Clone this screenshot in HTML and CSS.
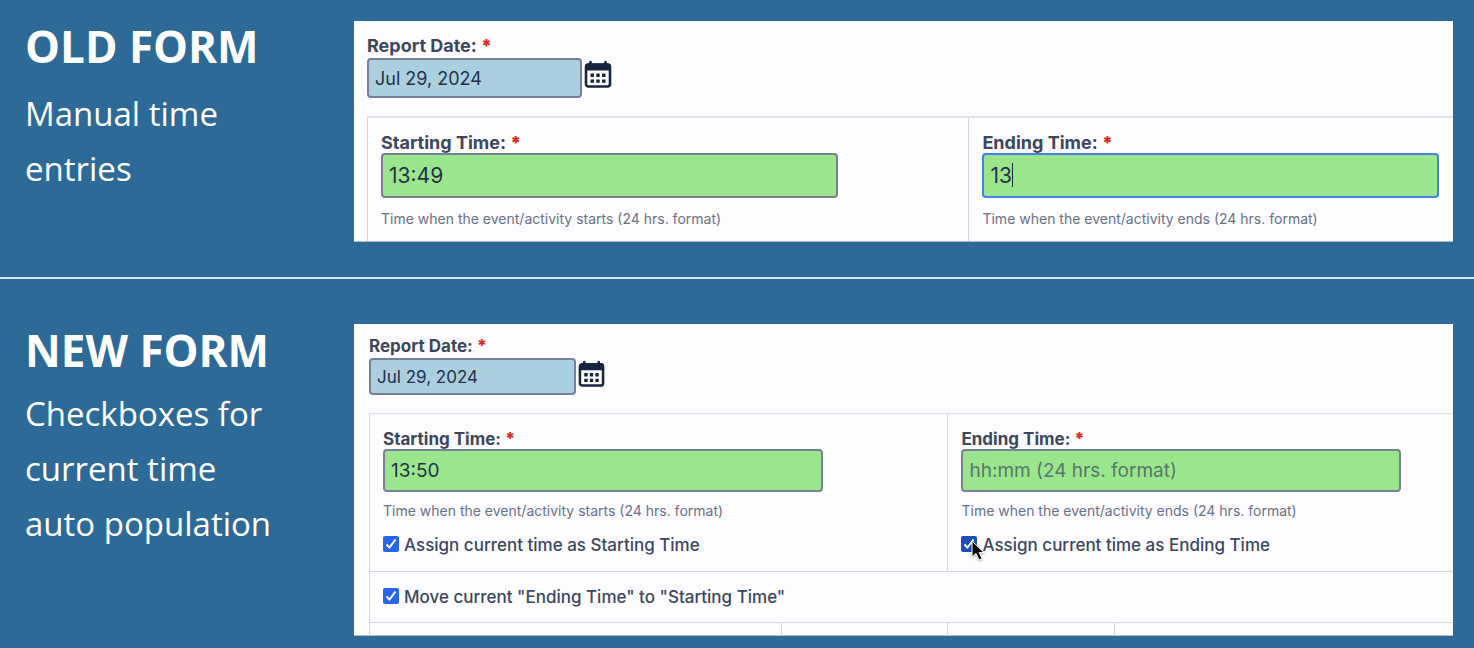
FILE: index.html
```html
<!DOCTYPE html>
<html lang="en">
<head>
<meta charset="utf-8">
<meta name="viewport" content="width=device-width, initial-scale=1">
<title>Old form and new form</title>
<link rel="stylesheet" href="styles.css">
</head>
<body>
<svg class="sprite" aria-hidden="true">
  <symbol id="calendar" viewBox="0 0 28 28">
    <path d="M6.500 2v4M21.500 2v4" stroke="currentColor" stroke-width="2.600" stroke-linecap="round"/>
    <rect x="2" y="4.500" width="24" height="22" rx="2.500" fill="none" stroke="currentColor" stroke-width="2.600"/>
    <path d="M1 6a2.500 2.500 0 0 1 2.500-2.500h21A2.500 2.500 0 0 1 27 6v4.500H1z" fill="currentColor"/>
    <path d="M6.500 13.500H10V17H6.500zM12.300 13.500h3.400V17h-3.400zM18 13.500h3.500V17H18zM6.500 19.500H10v3.300H6.500zM12.300 19.500h3.400v3.300h-3.400zM18 19.500h3.500v3.300H18z" fill="currentColor"/>
  </symbol>
</svg>
<main>
  <section class="comparison old">
    <div class="caption">
      <h2>OLD FORM</h2>
      <p>Manual time entries</p>
    </div>
    <form class="panel">
      <div class="date">
        <label for="old-date">Report Date: <b class="req">*</b></label>
        <div class="date-row">
          <input class="box date-box" id="old-date" type="text" value="Jul 29, 2024">
          <button class="picker" type="button" aria-label="Choose date"><svg><use href="#calendar"/></svg></button>
        </div>
      </div>
      <div class="times">
        <div class="cell">
          <label for="old-start">Starting Time: <b class="req">*</b></label>
          <input class="box time-box" id="old-start" type="text" value="13:49">
          <p class="help">Time when the event/activity starts (24 hrs. format)</p>
        </div>
        <div class="cell">
          <label for="old-end">Ending Time: <b class="req">*</b></label>
          <div class="editing">
            <input class="box time-box active" id="old-end" type="text" value="13">
            <span class="caret"></span>
          </div>
          <p class="help">Time when the event/activity ends (24 hrs. format)</p>
        </div>
      </div>
    </form>
  </section>

  <section class="comparison new">
    <div class="caption">
      <h2>NEW FORM</h2>
      <p>Checkboxes for current time auto population</p>
    </div>
    <form class="panel">
      <div class="date">
        <label for="new-date">Report Date: <b class="req">*</b></label>
        <div class="date-row">
          <input class="box date-box" id="new-date" type="text" value="Jul 29, 2024">
          <button class="picker" type="button" aria-label="Choose date"><svg><use href="#calendar"/></svg></button>
        </div>
      </div>
      <div class="times">
        <div class="cell">
          <label for="new-start">Starting Time: <b class="req">*</b></label>
          <input class="box time-box" id="new-start" type="text" value="13:50">
          <p class="help">Time when the event/activity starts (24 hrs. format)</p>
          <div class="check">
            <input type="checkbox" id="assign-start" checked>
            <label for="assign-start">Assign current time as Starting Time</label>
          </div>
        </div>
        <div class="cell">
          <label for="new-end">Ending Time: <b class="req">*</b></label>
          <input class="box time-box" id="new-end" type="text" placeholder="hh:mm (24 hrs. format)">
          <p class="help">Time when the event/activity ends (24 hrs. format)</p>
          <div class="check">
            <input class="pressed" type="checkbox" id="assign-end" checked>
            <label for="assign-end">Assign current time as Ending Time</label>
            <svg class="pointer" viewBox="0 0 14 22" aria-hidden="true"><path d="M1 1v16l4-3.500L8 20l3-1.300L8.200 12.500H13z" fill="#0b0b0f" stroke="#fff" stroke-width="1"/></svg>
          </div>
        </div>
      </div>
      <div class="move">
        <div class="check">
          <input type="checkbox" id="move-time" checked>
          <label for="move-time">Move current "Ending Time" to "Starting Time"</label>
        </div>
      </div>
      <div class="next-row"><div></div><div></div><div></div><div></div></div>
    </form>
  </section>
</main>
</body>
</html>
```
FILE: styles.css
```css
* { box-sizing: border-box; }

body {
  margin: 0;
  min-height: 100vh;
  background: #2d6a97;
  color: #3c475d;
  font-family: Inter, "Liberation Sans", sans-serif;
}

.sprite { position: absolute; width: 0; height: 0; }

.comparison {
  display: grid;
  grid-template-columns: 354px minmax(0, 1fr);
  align-items: start;
}

.old {
  --label: 18px;
  --date-text: 18px;
  --time-text: 21px;
  --date-height: 40px;
  --date-width: 215px;
  --time-height: 45px;
  --icon: 28px;
  --field: 457px;
  padding: 20px 21px 35px 0;
  border-bottom: 2px solid #dce8f1;
}

.new {
  --label: 17px;
  --date-text: 17px;
  --time-text: 19px;
  --date-height: 37px;
  --date-width: 207px;
  --time-height: 43px;
  --icon: 27px;
  --field: 440px;
  padding: 45px 21px 12px 0;
}

.caption {
  padding: 0 64px 0 25px;
  color: #fff;
  font-family: "Open Sans", "Noto Sans", sans-serif;
}

.caption h2 { margin: 0; font-size: 44px; line-height: 52px; }
.caption p { margin: 14px 0 0; font-size: 33px; line-height: 55px; }
.new .caption p { margin-top: 10px; }

.panel {
  background: #fdfcff;
  border-bottom: 1px solid #b5bdc7;
  padding-left: 13px;
}

.old .panel { margin-top: 1px; }
.new .panel { padding-left: 15px; }

label {
  display: block;
  font-size: var(--label);
  font-weight: 700;
  line-height: 24px;
}

.req { color: #dc2b20; font-weight: 900; }

.date { padding: 13px 0 18px; }
.new .date { padding-top: 10px; }
.date-row { display: flex; gap: 2px; }

.box {
  display: block;
  width: 100%;
  margin: 0;
  padding: 0 6px;
  border: 2px solid #778097;
  border-radius: 4px;
  outline: 0;
  color: #25314a;
  font-family: inherit;
}

.date-box {
  max-width: var(--date-width);
  height: var(--date-height);
  background: #aacfdf;
  font-size: var(--date-text);
}

.time-box {
  max-width: var(--field);
  height: var(--time-height);
  background: #9be68d;
  font-size: var(--time-text);
}

.time-box::placeholder { color: #58766b; opacity: 1; }
.active { border-color: #4581ed; }

.picker {
  width: var(--icon);
  height: var(--icon);
  margin-top: 2px;
  padding: 0;
  border: 0;
  background: none;
  color: #17233f;
}

.picker svg { display: block; width: 100%; height: 100%; }

.times {
  display: grid;
  grid-template-columns: 601fr 485fr;
  border-top: 2px solid #e1e2e7;
  border-left: 1px solid #d5d7dd;
}

.new .times { grid-template-columns: 578fr 506fr; border-top-width: 1px; }

.cell { padding: 15px 13px 12px; }
.new .cell { padding-bottom: 14px; }
.cell + .cell { border-left: 1px solid #d5d7dd; }

.cell > label { line-height: 20px; }

.help {
  margin: 11px 0 0;
  color: #697184;
  font-size: 14px;
  line-height: 20px;
}

.new .help { margin-top: 9px; }

.editing { position: relative; }

.caret {
  position: absolute;
  top: 10px;
  left: 30px;
  width: 1px;
  height: 24px;
  background: #182334;
}

.check { position: relative; display: flex; align-items: center; gap: 5px; }
.cell .check { margin-top: 12px; }
.check label { font-weight: 500; }

.check input {
  appearance: none;
  flex: none;
  width: 16px;
  height: 16px;
  margin: 0 0 2px;
  border-radius: 2px;
  background: #2765eb url("data:image/svg+xml,%3Csvg xmlns='http://www.w3.org/2000/svg' viewBox='0 0 16 16'%3E%3Cpath d='M3.500 8.500l3 3 6-8' fill='none' stroke='white' stroke-width='2'/%3E%3C/svg%3E") center / 16px;
}

.check .pressed { background-color: #1d4fbc; }

.pointer {
  position: absolute;
  top: 7px;
  left: 10px;
  width: 14px;
  height: 22px;
  filter: drop-shadow(0 1px 1px #0005);
}

.move {
  padding: 13px;
  border: solid #d5d7dd;
  border-width: 1px 0 1px 1px;
}

.next-row {
  display: grid;
  grid-template-columns: 411fr 167fr 167fr 339fr;
  min-height: 12px;
  border-left: 1px solid #d5d7dd;
}

.next-row div + div { border-left: 1px solid #d5d7dd; }
```
